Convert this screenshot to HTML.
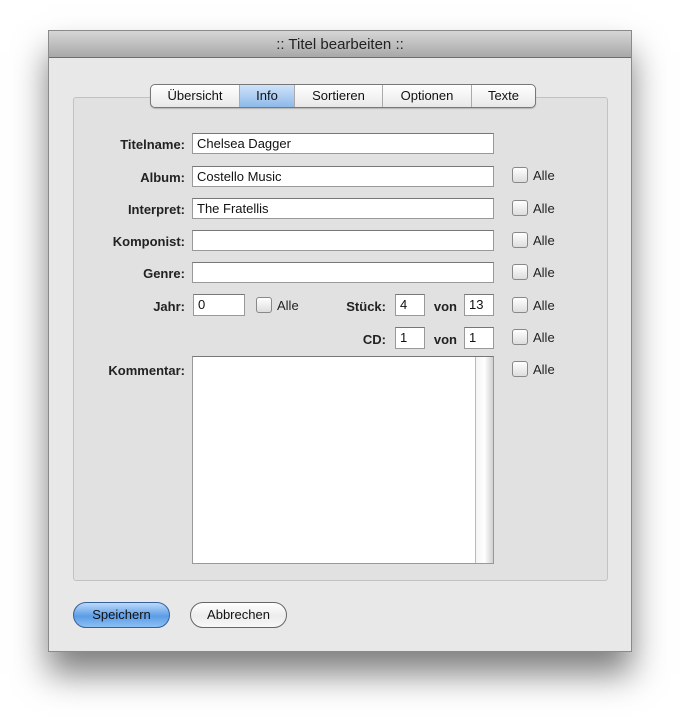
<!DOCTYPE html>
<html><head><meta charset="utf-8"><style>
*{box-sizing:border-box}
body{margin:0;width:680px;height:718px;background:#fff;font-family:"Liberation Sans",sans-serif;position:relative;overflow:hidden}
.win{position:absolute;left:48px;top:30px;width:584px;height:622px;background:#e8e8e8;border:1px solid #8a8a8a;box-shadow:0 22px 32px rgba(0,0,0,.5)}
.tb{position:absolute;left:0;top:0;width:100%;height:27px;background:linear-gradient(#d6d6d6,#a8a8a8);border-bottom:1px solid #6d6d6d;text-align:center;font-size:15px;line-height:27px;color:#222}
.grp{position:absolute;left:24px;top:66px;width:535px;height:484px;background:#e1e1e1;border:1px solid #c2c2c2;border-radius:3px}
.tabs{position:absolute;left:101px;top:53px;height:24px;display:flex;border:1px solid #777;border-radius:5px;background:linear-gradient(#fff,#e8e8e8);overflow:hidden;font-size:13px;box-shadow:0 1px 1px rgba(0,0,0,.2)}
.tabs div{line-height:22px;text-align:center;border-left:1px solid #aaa;color:#111}
.tabs div:first-child{border-left:none}
.tabs .on{background:linear-gradient(#cfe3fa,#8db9ea);}
.lbl{position:absolute;font-size:13px;font-weight:bold;color:#222;text-align:right}
.in{position:absolute;background:#fff;border:1px solid #999;border-top-color:#777;font-size:13px;padding-left:4px;line-height:19px;color:#111}
.cb{position:absolute;width:16px;height:16px;border:1px solid #888;border-radius:3px;background:linear-gradient(#fff,#ddd)}
.al{position:absolute;font-size:13px;color:#222}
.btn{position:absolute;top:571px;height:26px;border-radius:13px;font-size:13px;text-align:center;line-height:24px;border:1px solid #666;color:#111}
</style></head><body>
<div class="win">
<div class="tb">:: Titel bearbeiten ::</div>
<div class="grp"></div>
<div class="tabs"><div style="width:88px">Übersicht</div><div class="on" style="width:55px">Info</div><div style="width:88px">Sortieren</div><div style="width:89px">Optionen</div><div style="width:64px">Texte</div></div>

<div class="lbl" style="left:0;width:136px;top:106px">Titelname:</div>
<div class="in" style="left:143px;top:102px;width:302px;height:21px">Chelsea Dagger</div>

<div class="lbl" style="left:0;width:136px;top:139px">Album:</div>
<div class="in" style="left:143px;top:135px;width:302px;height:21px">Costello Music</div>
<div class="cb" style="left:463px;top:136px"></div><div class="al" style="left:484px;top:137px">Alle</div>

<div class="lbl" style="left:0;width:136px;top:171px">Interpret:</div>
<div class="in" style="left:143px;top:167px;width:302px;height:21px">The Fratellis</div>
<div class="cb" style="left:463px;top:169px"></div><div class="al" style="left:484px;top:170px">Alle</div>

<div class="lbl" style="left:0;width:136px;top:203px">Komponist:</div>
<div class="in" style="left:143px;top:199px;width:302px;height:21px"></div>
<div class="cb" style="left:463px;top:201px"></div><div class="al" style="left:484px;top:202px">Alle</div>

<div class="lbl" style="left:0;width:136px;top:235px">Genre:</div>
<div class="in" style="left:143px;top:231px;width:302px;height:21px"></div>
<div class="cb" style="left:463px;top:233px"></div><div class="al" style="left:484px;top:234px">Alle</div>

<div class="lbl" style="left:0;width:136px;top:268px">Jahr:</div>
<div class="in" style="left:144px;top:263px;width:52px;height:22px">0</div>
<div class="cb" style="left:207px;top:266px"></div><div class="al" style="left:228px;top:267px">Alle</div>
<div class="lbl" style="left:289px;width:48px;top:268px">Stück:</div>
<div class="in" style="left:346px;top:263px;width:30px;height:22px">4</div>
<div class="lbl" style="left:382px;width:26px;top:268px">von</div>
<div class="in" style="left:415px;top:263px;width:30px;height:22px">13</div>
<div class="cb" style="left:463px;top:266px"></div><div class="al" style="left:484px;top:267px">Alle</div>

<div class="lbl" style="left:289px;width:48px;top:301px">CD:</div>
<div class="in" style="left:346px;top:296px;width:30px;height:22px">1</div>
<div class="lbl" style="left:382px;width:26px;top:301px">von</div>
<div class="in" style="left:415px;top:296px;width:30px;height:22px">1</div>
<div class="cb" style="left:463px;top:298px"></div><div class="al" style="left:484px;top:299px">Alle</div>

<div class="lbl" style="left:0;width:136px;top:332px">Kommentar:</div>
<div class="in" style="left:143px;top:325px;width:302px;height:208px"><div style="position:absolute;right:0;top:0;width:18px;height:100%;background:linear-gradient(90deg,#f4f4f4,#fff,#d0d0d0);border-left:1px solid #bbb"></div></div>
<div class="cb" style="left:463px;top:330px"></div><div class="al" style="left:484px;top:331px">Alle</div>

<div class="btn" style="left:24px;width:97px;background:linear-gradient(#bcd9fa,#5c9de6 55%,#8cc0f4);border-color:#35609a">Speichern</div>
<div class="btn" style="left:141px;width:97px;background:linear-gradient(#fff,#ececec 55%,#f8f8f8)">Abbrechen</div>
</div>
</body></html>
